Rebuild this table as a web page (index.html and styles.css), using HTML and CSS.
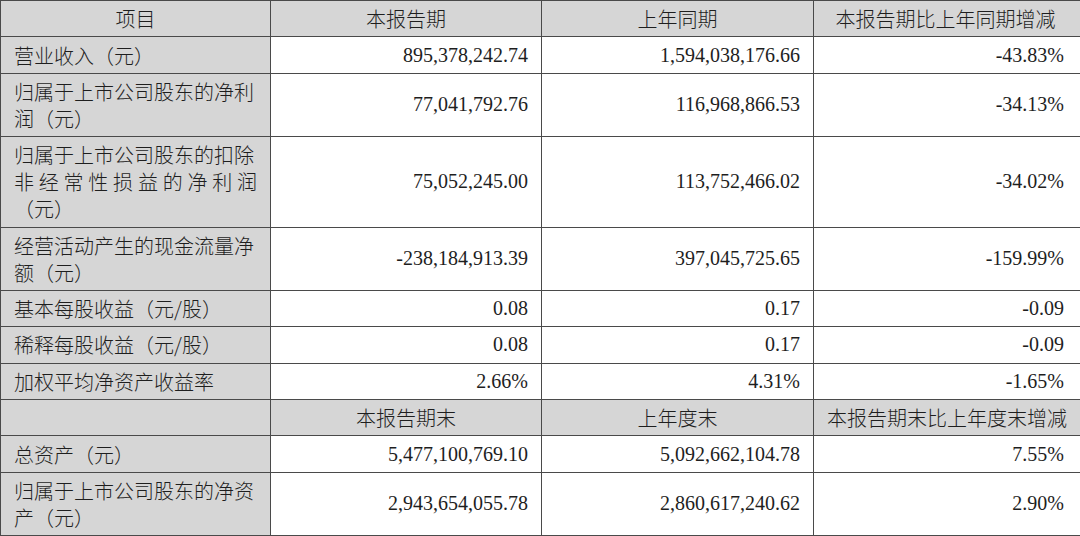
FILE: index.html
```html
<!DOCTYPE html>
<html lang="zh-CN">
<head>
<meta charset="utf-8">
<title>主要会计数据</title>
<link rel="stylesheet" href="styles.css">
</head>
<body>
<table class="fin">
  <colgroup>
    <col class="c1"><col class="c2"><col class="c3"><col class="c4">
  </colgroup>
  <tr class="head">
    <td class="label center">项目</td>
    <td class="center">本报告期</td>
    <td class="center">上年同期</td>
    <td class="center">本报告期比上年同期增减</td>
  </tr>
  <tr>
    <td class="label">营业收入（元）</td>
    <td class="num">895,378,242.74</td>
    <td class="num">1,594,038,176.66</td>
    <td class="num">-43.83%</td>
  </tr>
  <tr>
    <td class="label"><span class="ln">归属于上市公司股东的净利</span><span class="ln">润（元）</span></td>
    <td class="num">77,041,792.76</td>
    <td class="num">116,968,866.53</td>
    <td class="num">-34.13%</td>
  </tr>
  <tr>
    <td class="label"><span class="ln">归属于上市公司股东的扣除</span><span class="ln just">非经常性损益的净利润</span><span class="ln">（元）</span></td>
    <td class="num">75,052,245.00</td>
    <td class="num">113,752,466.02</td>
    <td class="num">-34.02%</td>
  </tr>
  <tr>
    <td class="label"><span class="ln">经营活动产生的现金流量净</span><span class="ln">额（元）</span></td>
    <td class="num">-238,184,913.39</td>
    <td class="num">397,045,725.65</td>
    <td class="num">-159.99%</td>
  </tr>
  <tr>
    <td class="label">基本每股收益（元/股）</td>
    <td class="num">0.08</td>
    <td class="num">0.17</td>
    <td class="num">-0.09</td>
  </tr>
  <tr>
    <td class="label">稀释每股收益（元/股）</td>
    <td class="num">0.08</td>
    <td class="num">0.17</td>
    <td class="num">-0.09</td>
  </tr>
  <tr>
    <td class="label">加权平均净资产收益率</td>
    <td class="num">2.66%</td>
    <td class="num">4.31%</td>
    <td class="num">-1.65%</td>
  </tr>
  <tr class="head">
    <td class="label"></td>
    <td class="center">本报告期末</td>
    <td class="center">上年度末</td>
    <td class="center">本报告期末比上年度末增减</td>
  </tr>
  <tr>
    <td class="label">总资产（元）</td>
    <td class="num">5,477,100,769.10</td>
    <td class="num">5,092,662,104.78</td>
    <td class="num">7.55%</td>
  </tr>
  <tr>
    <td class="label"><span class="ln">归属于上市公司股东的净资</span><span class="ln">产（元）</span></td>
    <td class="num">2,943,654,055.78</td>
    <td class="num">2,860,617,240.62</td>
    <td class="num">2.90%</td>
  </tr>
</table>
</body>
</html>
```
FILE: styles.css
```css
html, body {
  margin: 0;
  padding: 0;
  background: #ffffff;
}

.fin {
  border-collapse: collapse;
  table-layout: fixed;
  width: 1080px;
  font-family: "Liberation Serif", "Noto Sans CJK SC", serif;
  font-size: 20px;
  line-height: 27px;
  color: #1e1e1e;
}

.c1 { width: 270px; }
.c2 { width: 271px; }
.c3 { width: 272px; }
.c4 { width: 267px; }

.fin td {
  border: 1px solid #4a4a4a;
  padding: 4.2px 13px 4.2px 13px;
  vertical-align: middle;
  white-space: nowrap;
}

.fin td:last-child {
  padding-right: 16px;
}

.head td {
  background: #d6d6d6;
}

.fin td.label {
  background: #d6d6d6;
  text-align: left;
  font-family: "Noto Sans CJK SC", "Liberation Serif", sans-serif;
  font-weight: 300;
}

.fin td.center {
  text-align: center;
  font-family: "Noto Sans CJK SC", "Liberation Serif", sans-serif;
  font-weight: 300;
}

.fin td.num {
  text-align: right;
}

.ln {
  display: block;
}

.just {
  text-align: justify;
  text-align-last: justify;
}
```
